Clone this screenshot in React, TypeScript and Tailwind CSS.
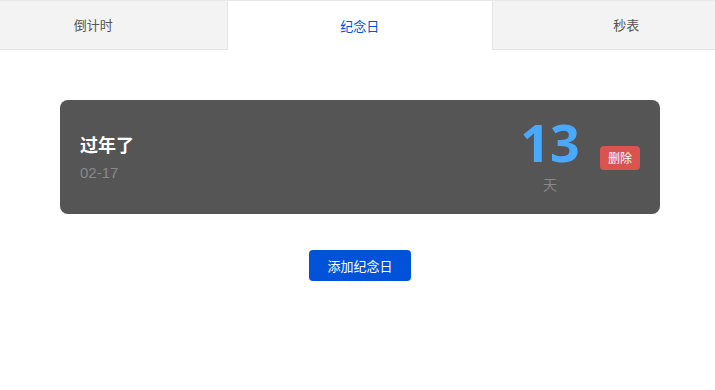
import React, { useState } from 'react';

const tabs = ['倒计时', '纪念日', '秒表'];

function App() {
  const [active, setActive] = useState(1);

  return (
    <div className="min-h-screen bg-white font-['Noto_Sans_CJK_SC',sans-serif]">
      {/* tab bar, wider than the window like the original */}
      <div className="w-full overflow-hidden">
        <div className="flex w-[800px] -ml-[40px] border-t border-[#e8e8e8]">
          {tabs.map((t, i) => (
            <button
              key={t}
              onClick={() => setActive(i)}
              className={
                i === active
                  ? 'w-[266.5px] h-[49px] bg-white text-[13px] text-[#0052d9] border-x border-[#e6e6e6]'
                  : 'w-[266.5px] h-[49px] bg-[#f3f3f3] text-[13px] text-[#555] border-b border-[#e6e6e6]'
              }
            >
              {t}
            </button>
          ))}
        </div>
      </div>

      {/* card */}
      <div className="ml-[60px] mt-[50px] w-[600px] h-[114px] rounded-lg bg-[#555555] flex items-center pl-5 pr-5">
        <div className="flex-1">
          <div className="text-white text-[18px] font-bold leading-6">过年了</div>
          <div className="mt-[7px] text-[#888] text-[15px] leading-5 font-['Liberation_Sans',sans-serif]">02-17</div>
        </div>
        <div className="flex flex-col items-center w-[60px] mr-[20px] -mt-[20px]">
          <div className="text-[#4ba8ff] text-[52px] font-bold leading-normal font-['Open_Sans',sans-serif]">13</div>
          <div className="text-[#888] text-[14px] leading-[14px] -mt-[4px]">天</div>
        </div>
        <button className="w-10 h-6 mt-[2px] rounded bg-[#d9534f] text-white text-[12px] leading-6">删除</button>
      </div>

      {/* add button */}
      <div className="ml-[60px] w-[600px] flex justify-center mt-[36px]">
        <button className="w-[102px] h-[31px] rounded bg-[#0052d9] text-white text-[13px]">添加纪念日</button>
      </div>
    </div>
  );
}

export default App;
